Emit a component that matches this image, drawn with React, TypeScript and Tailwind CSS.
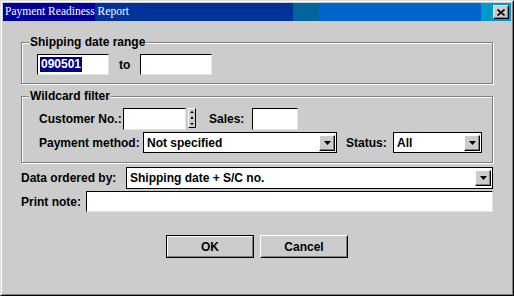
import React from "react";

const sans = "font-['Liberation_Sans',Arial,sans-serif]";

function DropButton() {
  return (
    <div className="w-[16px] h-[16px] mr-px flex items-center justify-center bg-[#cccccc] border border-t-white border-l-white border-b-black border-r-black shadow-[inset_-1px_-1px_0_#808080]">
      <svg width="7" height="4" viewBox="0 0 7 4">
        <polygon points="0,0 7,0 3.5,4" fill="#000" />
      </svg>
    </div>
  );
}

function Select({ className, value }: { className: string; value: string }) {
  return (
    <div className={`flex items-center bg-white border border-black h-[21px] ${className}`}>
      <span className={`flex-1 pl-[3px] text-[12px] font-bold text-black ${sans}`}>{value}</span>
      <DropButton />
    </div>
  );
}

function Input({ className, children }: { className: string; children?: React.ReactNode }) {
  return (
    <div className={`flex items-center bg-white border border-t-black border-l-black border-b-[#e4e4e4] border-r-[#e4e4e4] ${className}`}>
      {children}
    </div>
  );
}

function Label({ children, className = "" }: { children: React.ReactNode; className?: string }) {
  return <span className={`block text-[12px] font-bold text-black leading-[14px] ${sans} ${className}`}>{children}</span>;
}

export default function App() {
  return (
    <div className="w-[514px] h-[296px] bg-[#cccccc] border border-t-[#dfdfdf] border-l-[#dfdfdf] border-r-black border-b-black">
      <div className="h-full flex flex-col p-px border border-t-white border-l-white border-r-[#808080] border-b-[#808080]">
        {/* Title bar */}
        <div className="h-[18px] shrink-0 flex items-center justify-between bg-[linear-gradient(to_right,#000099_0_92px,#003399_92px_290px,#006699_290px_316px,#0066cc_316px_478px,#0099cc_478px)]">
          <span className="pl-[2px] text-white text-[11.5px] leading-none font-['Liberation_Serif','Times_New_Roman',serif]">
            Payment Readiness Report
          </span>
          <div className="w-[16px] h-[14px] mr-[2px] flex items-center justify-center bg-[#cccccc] border border-t-white border-l-white border-b-black border-r-black shadow-[inset_-1px_-1px_0_#808080]">
            <svg width="8" height="7" viewBox="0 0 8 7">
              <path d="M0.5 0.5 L7.5 6.5 M7.5 0.5 L0.5 6.5" stroke="#000" strokeWidth="1.6" />
            </svg>
          </div>
        </div>

        <div className="flex-1 px-[18px]">
          {/* Shipping date range */}
          <fieldset className="mt-[14px] pl-[7px] pb-[8px] border border-[#808080] shadow-[inset_1px_1px_0_#fff,1px_1px_0_#fff]">
            <legend className="px-px bg-[#cccccc] text-[12px] leading-[14px]">
              <Label>Shipping date range</Label>
            </legend>
            <div className="mt-[5px] pl-[8px] flex items-center">
              <Input className="w-[72px] h-[21px]">
                <span className={`ml-[2px] px-px bg-[#000080] text-white text-[12px] font-bold leading-[15px] ${sans}`}>090501</span>
              </Input>
              <Label className="ml-[10px]">to</Label>
              <Input className="ml-[10px] w-[72px] h-[21px]" />
            </div>
          </fieldset>

          {/* Wildcard filter */}
          <fieldset className="mt-[5px] pl-[7px] pb-[9px] border border-[#808080] shadow-[inset_1px_1px_0_#fff,1px_1px_0_#fff]">
            <legend className="px-px bg-[#cccccc] text-[12px] leading-[14px]">
              <Label>Wildcard filter</Label>
            </legend>
            <div className="mt-[5px] pl-[10px] flex items-center">
              <Label className="w-[84px]">Customer No.:</Label>
              <Input className="w-[63px] h-[22px]" />
              <div className="ml-[2px] w-[8px] h-[20px] self-start flex flex-col items-center justify-center bg-[#cccccc] border border-t-white border-l-white border-b-black border-r-black">
                <svg width="4" height="14" viewBox="0 0 4 14">
                  <polygon points="2,0 4,2 0,2" fill="#000" />
                  <rect x="1" y="6" width="2" height="2" fill="#000" />
                  <polygon points="0,12 4,12 2,14" fill="#000" />
                </svg>
              </div>
              <Label className="ml-[13px] w-[43px]">Sales:</Label>
              <Input className="w-[46px] h-[22px]" />
            </div>
            <div className="mt-[2px] pl-[10px] flex items-center">
              <Label className="w-[104px]">Payment method:</Label>
              <Select className="w-[194px]" value="Not specified" />
              <Label className="ml-[9px] w-[47px]">Status:</Label>
              <Select className="w-[89px]" value="All" />
            </div>
          </fieldset>

          {/* Ordering */}
          <div className="mt-[4px] flex items-center">
            <Label className="w-[105px]">Data ordered by:</Label>
            <Select className="flex-1 h-[22px]" value="Shipping date + S/C no." />
          </div>
          <div className="mt-[2px] flex items-center">
            <Label className="w-[65px]">Print note:</Label>
            <Input className="flex-1 h-[21px]" />
          </div>

          {/* Buttons */}
          <div className="mt-[23px] flex justify-center gap-[6px]">
            <button className="w-[88px] h-[23px] border border-black bg-[#cccccc]">
              <div className="h-full flex items-center justify-center border border-t-white border-l-white border-b-[#808080] border-r-[#808080]">
                <Label>OK</Label>
              </div>
            </button>
            <button className="w-[88px] h-[23px] bg-[#cccccc] border border-t-white border-l-white border-b-black border-r-black">
              <div className="h-full flex items-center justify-center border border-t-[#cccccc] border-l-[#cccccc] border-b-[#808080] border-r-[#808080]">
                <Label>Cancel</Label>
              </div>
            </button>
          </div>
        </div>
      </div>
    </div>
  );
}
